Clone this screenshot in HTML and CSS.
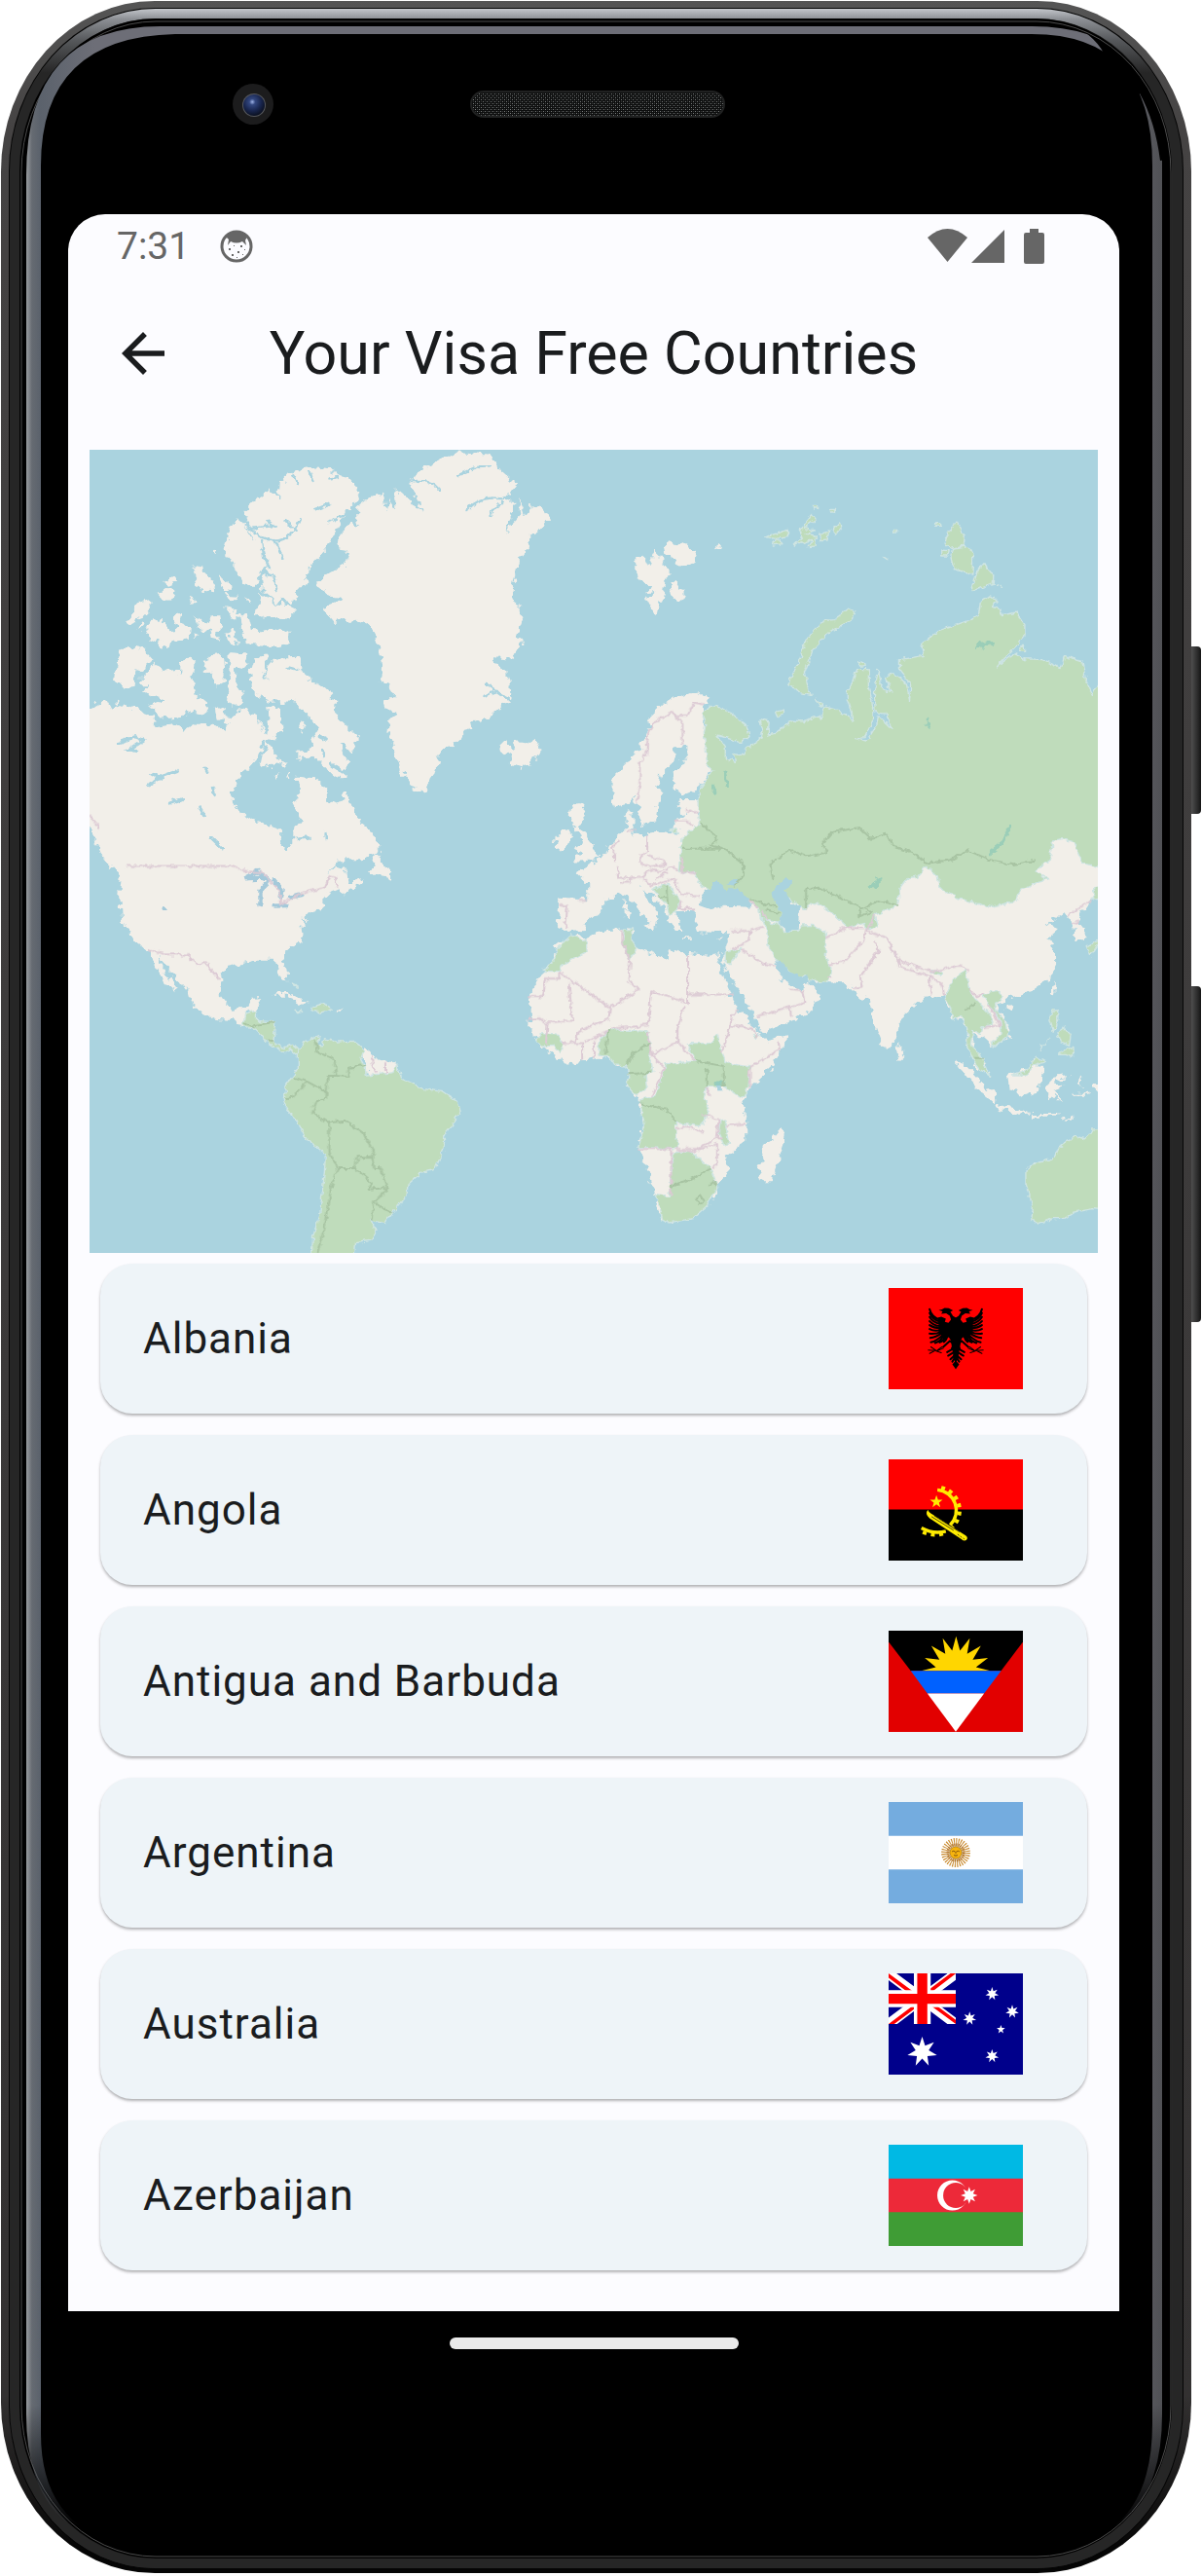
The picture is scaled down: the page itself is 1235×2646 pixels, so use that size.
FILE: index.html
```html
<!DOCTYPE html>
<html lang="en">
<head>
<meta charset="utf-8">
<meta name="viewport" content="width=device-width, initial-scale=1">
<title>Your Visa Free Countries</title>
<link rel="stylesheet" href="styles.css">
</head>
<body>
<div class="phone">
  <svg class="phone-body" viewBox="0 0 1235 2646" preserveAspectRatio="none" aria-hidden="true">
    <defs>
      <linearGradient id="key" x1="0" x2="1" y1="0" y2="0"><stop offset="0" stop-color="#0c0c0c"/><stop offset=".5" stop-color="#4c4c4c"/><stop offset="1" stop-color="#161616"/></linearGradient>
      <linearGradient id="shine" gradientUnits="userSpaceOnUse" x1="0" x2="0" y1="9" y2="75"><stop offset="0" stop-color="#c3c6cb"/><stop offset=".16" stop-color="#8d9095"/><stop offset=".5" stop-color="#55575a"/><stop offset="1" stop-color="#262626"/></linearGradient>
      <linearGradient id="body" gradientUnits="userSpaceOnUse" x1="0" x2="0" y1="0" y2="2646"><stop offset="0" stop-color="#555"/><stop offset=".05" stop-color="#454343"/><stop offset=".93" stop-color="#333131"/><stop offset=".99" stop-color="#050505"/></linearGradient>
      <linearGradient id="edgeX" gradientUnits="userSpaceOnUse" x1="27" x2="1194" y1="0" y2="0"><stop offset="0" stop-color="#999c9f"/><stop offset=".005" stop-color="#666b72"/><stop offset=".012" stop-color="#5b626c"/><stop offset=".06" stop-color="#6d6e77"/><stop offset=".95" stop-color="#6d6e77"/><stop offset="1" stop-color="#505155"/></linearGradient>
      <linearGradient id="fade" gradientUnits="userSpaceOnUse" x1="0" x2="0" y1="2470" y2="2595"><stop offset="0" stop-color="#fff"/><stop offset="1" stop-color="#000"/></linearGradient>
      <mask id="edgeMask"><rect width="1235" height="2646" fill="url(#fade)"/><path d="M1090 20Q1122 32 1135 56L1130 70 1165 105 1171 96Q1187 125 1192 165L1230 160 1200 20Z" fill="#000"/></mask>
      <radialGradient id="lens" cx=".42" cy=".35" r=".7"><stop offset="0" stop-color="#9fb4e8"/><stop offset=".2" stop-color="#33477f"/><stop offset=".6" stop-color="#18254d"/><stop offset="1" stop-color="#090d18"/></radialGradient>
      <pattern id="mesh" width="4" height="4" patternUnits="userSpaceOnUse"><rect width="4" height="4" fill="#0d0e0e"/><path d="M0 0h1v1h-1zM2 2h1v1h-1z" fill="#777a7a"/><path d="M2 0h1v1h-1zM0 2h1v1h-1z" fill="#343636"/></pattern>
    </defs>
    <rect x="1215" y="664" width="19" height="172" rx="4" fill="url(#key)"/>
    <rect x="1215" y="1013" width="19" height="345" rx="4" fill="url(#key)"/>
    <rect x="1" y="1" width="1223" height="2642" rx="158" ry="175" fill="url(#body)"/>
    <rect x="9" y="8" width="1207" height="2631" rx="150" ry="168" fill="#060606"/>
    <rect x="11" y="9" width="1203" height="2629" rx="148" ry="166" fill="#272727"/>
    <rect x="15" y="14" width="1195" height="2619" rx="145" ry="162" fill="none" stroke="url(#shine)" stroke-width="10"/>
    <rect x="20" y="19" width="1184" height="2609" rx="140" ry="157"/>
    <rect x="22" y="22" width="1181" height="2604" rx="138" ry="155" fill="none" stroke="#4c4c4c"/>
    <path mask="url(#edgeMask)" fill="url(#edgeX)" fill-rule="evenodd" d="M165 27H1060Q1194 27 1194 165V2480Q1194 2620 1060 2620H165Q27 2620 27 2480V180Q27 27 165 27ZM180 35Q42 38 42 170V2500Q42 2620 180 2620H1060Q1184 2620 1184 2490V170Q1184 35 1060 35Z"/>
    <circle cx="260" cy="107" r="21" fill="#1c1c1d"/>
    <circle cx="261" cy="108" r="12" fill="#55575c"/>
    <circle cx="261" cy="108" r="11" fill="url(#lens)"/>
    <rect x="484" y="94" width="260" height="26" rx="13" fill="url(#mesh)" stroke="#202121" stroke-width="2"/>
  </svg>

  <main class="screen">
    <div class="status">
      <div class="status-group">
        <span class="clock">7:31</span>
        <svg class="status-app" viewBox="0 0 36 36" aria-hidden="true"><circle cx="18" cy="18" r="15" fill="none" stroke="#666" stroke-width="3"/><path d="M7 8Q18-2 29 8L27 12 28 17 24 13Q18 16 12 13L9 17 10 11Z" fill="#666"/><path d="M10 20h2v2h-2zM15 17h1v1h-1zM22 17h2v2h-2zM26 21h1v1h-1zM19 23h2v2h-2zM13 26h2v2h-2zM24 26h1v1h-1zM18 29h1v1h-1z" fill="#666"/></svg>
      </div>
      <svg class="status-icons" viewBox="953 235 120 36" aria-hidden="true" fill="#666"><path d="M953 244Q973.500 226 994 244L973.500 269Z"/><path d="M998 270 1032 236V270Z"/><path d="M1058 235h9v4h4q2 0 2 2v28q0 2-2 2h-17q-2 0-2-2v-28q0-2 2-2h4z"/></svg>
    </div>

    <header class="bar">
      <button class="back" type="button" aria-label="Back"><svg viewBox="0 0 24 24" aria-hidden="true"><path d="M20 11H7.830l5.590-5.590L12 4l-8 8 8 8 1.410-1.410L7.830 13H20v-2z" fill="#1a1c1e"/></svg></button>
      <h1>Your Visa Free Countries</h1>
    </header>

    <section class="content">
      <svg class="map" viewBox="21 21 3064 2475" preserveAspectRatio="none" role="img" aria-label="World map with visa free countries in green">
        <defs>
          <filter id="coast" x="0" y="0" width="1" height="1"><feTurbulence type="fractalNoise" baseFrequency=".045" numOctaves="2" seed="4"/><feDisplacementMap in="SourceGraphic" scale="34" xChannelSelector="R" yChannelSelector="G"/></filter>
          <filter id="coast-fine" x="0" y="0" width="1" height="1"><feTurbulence type="fractalNoise" baseFrequency=".06" numOctaves="2" seed="9"/><feDisplacementMap in="SourceGraphic" scale="18" xChannelSelector="R" yChannelSelector="G"/></filter>
        </defs>
        <rect x="21" y="21" width="3064" height="2475" fill="#aad3df"/>

        <g fill="#f2efe9" filter="url(#coast)">
          <rect x="1" y="1" width="3104" height="2515" fill="none"/>
          <!-- Greenland, Arctic Canada, Iceland -->
          <path d="M835 195 860 175 915 155 922 212 932 175 950 200 952 140 975 160 1000 180 1025 212 1018 175 992 125 1005 100 1050 70 1100 45 1150 28 1240 35 1252 55 1270 80 1320 125 1300 155 1270 165 1305 180 1308 215 1282 275 1330 225 1325 170 1345 220 1365 195 1400 203 1417 232 1385 275 1360 290 1345 345 1320 350 1315 395 1300 480 1325 500 1338 545 1320 590 1335 610 1310 665 1245 660 1290 715 1300 770 1290 800 1245 840 1180 865 1150 905 1120 935 1090 945 1075 1000 1060 1040 1045 1085 1025 1070 995 1060 965 1005 945 940 930 900 935 850 960 835 925 820 915 790 955 790 925 745 908 735 912 690 905 640 890 595 870 560 825 542 765 552 730 510 770 495 785 475 745 468 710 440 730 410 765 390 795 380 807 345 795 325 770 315 790 270 820 245 840 262 835 230Z"/>
          <path d="M490 210 520 180 565 142 595 170 600 125 625 95 655 85 690 75 740 80 770 95 805 105 842 150 830 180 800 210 745 245 800 225 770 270 745 320 720 350 690 375 685 420 655 455 640 490 600 485 585 490 550 460 545 420 565 385 550 330 490 250 505 230Z"/>
          <path d="M470 232 490 250 515 290 540 310 545 345 565 375 540 405 525 440 490 440 470 400 455 370 440 345 435 315 450 260Z"/>
          <path d="M515 520 545 495 535 462 575 490 640 500 648 520 625 545 560 540ZM480 530 505 535 515 575 540 580 600 568 630 585 625 620 590 628 520 625 490 612ZM435 505 470 515 480 535 455 540ZM330 378 350 375 370 405 400 425 403 460 370 455 345 435ZM412 408 445 430 450 455 430 458ZM435 468 468 470 460 484 440 482ZM498 475 512 485 505 500ZM390 325 405 322 408 345 398 340ZM240 430 275 410 285 430 262 440ZM222 460 240 465 262 447 280 455 272 485 245 483ZM130 550 150 520 175 490 208 482 210 505 190 530 150 558ZM170 580 185 550 192 560ZM190 590 215 540 240 550 265 580 290 575 275 540 290 520 305 560 328 565 325 600 285 608 240 630 232 612ZM325 470 335 475 342 500 333 498ZM342 530 360 545 385 560 380 540 415 530 420 570 410 605 390 600 385 578 360 575ZM440 590 455 570 468 620 445 612ZM340 590h8v12h-8z"/>
          <path d="M110 635 145 628 185 635 215 670 165 705 155 745 128 760 98 725 105 690ZM180 720 225 680 240 705 285 695 300 715 300 680 320 658 340 670 335 720 345 770 385 805 375 835 320 825 300 845 250 850 225 825 195 810 250 790 185 770 205 745 180 745ZM365 690 385 655 425 650 430 700 432 740 410 752 390 715ZM445 645 505 650 490 700 465 695 465 735 485 770 485 800 455 815 435 790 450 720ZM515 760 510 710 525 660 565 655 550 690 560 735 560 690 580 665 655 662 670 700 690 735 735 750 770 795 765 835 840 908 820 955 800 930 775 920 805 985 800 1035 775 1030 735 1000 705 965 655 975 655 950 690 945 700 910 715 885 690 845 640 795 575 800 530 780ZM405 820 430 810 440 845 460 845 440 865 410 850ZM480 815 500 820 545 890 530 840 520 820 560 900 565 870 560 810 600 815 608 880 585 910 550 925 500 890ZM655 880 665 855 680 880 665 890ZM545 990 560 920 590 965 618 992 590 985 570 1003ZM580 1020 600 1015 590 1028ZM623 1015h8v25h-8z"/>
          <path d="M1270 935 1290 915 1300 945 1320 922 1350 925 1375 915 1392 945 1380 975 1335 1000 1295 985 1300 965 1272 945Z"/>
          <path d="M1481 1150 1485 1120 1510 1110 1530 1135 1510 1180 1530 1200 1545 1240 1575 1270 1560 1285 1490 1290 1520 1265 1490 1250 1520 1230 1510 1200 1490 1180ZM1440 1220 1465 1190 1485 1205 1475 1245 1435 1258Z"/>
          <path d="M0 830 50 800 70 790 85 820 105 800 125 808 165 822 215 840 225 870 280 865 300 890 340 865 400 870 440 885 445 850 480 815 500 830 520 830 545 890 550 920 535 965 505 1000 480 1020 460 1055 455 1105 480 1145 540 1170 600 1190 605 1240 625 1260 640 1240 640 1195 665 1160 640 1110 655 1075 650 1025 705 1030 745 1065 750 1105 770 1115 800 1075 820 1120 845 1170 880 1200 905 1240 890 1270 60 1270 40 1230 30 1190 0 1160Z"/>
          <!-- North America, lower part -->
          <g transform="translate(0 1245)">
            <path d="M45 -10 50 5 65 40 115 90 110 150 115 215 155 290 200 320 220 370 235 395 255 430 280 442 270 410 240 370 228 335 270 385 325 450 335 490 400 530 460 535 490 548 500 510 530 500 545 465 510 468 495 498 450 500 420 460 418 410 430 370 480 358 530 350 585 350 600 400 622 415 620 380 605 350 610 330 670 285 670 265 665 220 680 235 690 200 735 185 735 150 780 130 790 150 850 115 850 100 810 110 800 65 770 60 740 90 780 40 850 40 890 25 905 -10 640 -10 625 15 605 -10ZM870 80 890 30 905 20 905 48 935 70 935 98 900 85ZM575 458 600 445 640 455 688 480 660 482 620 458ZM772 500h20v6h-20zM845 640 860 625 895 652 950 665 945 698 870 708Z"/>
          </g>
          <!-- Scandinavia and the Arctic islands -->
          <g transform="translate(1538 0)">
            <path d="M140 345 170 350 185 385 200 330 215 345 230 380 255 405 230 425 222 480 205 530 190 510 175 480 215 455 172 460 190 435 160 435 140 400ZM225 320 245 300 265 320 280 305 325 330 315 362 285 382 260 370 255 345 230 345ZM250 425 262 425 290 470 278 492 255 475ZM378 320 395 308 398 318 382 325Z"/>
            <path d="M80 1125 70 1085 70 1030 105 995 140 965 165 915 185 870 175 855 225 805 280 780 310 765 365 785 350 810 345 850 355 900 360 990 375 1010 335 1065 285 1085 260 1070 255 1020 300 960 300 935 265 940 255 985 220 1020 210 1060 230 1080 210 1110 200 1165 165 1180 145 1110 135 1090 115 1120ZM265 1125 280 1095 335 1095 340 1175 310 1205 290 1215 260 1190 258 1160 295 1150ZM110 1150 135 1135 135 1190 115 1195Z"/>
          </g>
          <!-- Europe, Asia, Africa -->
          <g transform="translate(1538 1245)">
            <path d="M-60 258 -95 245 -90 155 -5 160 -5 110 -40 75 -5 60 10 48 35 40 60 0 85 -30 115 -60 140 -35 200 -45 280 -40 290 -100 1567 -100 1567 130 1535 150 1490 215 1508 260 1505 285 1475 290 1470 235 1450 205 1420 215 1395 240 1428 250 1395 280 1420 330 1420 365 1395 410 1345 445 1280 465 1240 490 1270 540 1278 580 1230 618 1200 590 1170 570 1165 620 1195 650 1218 705 1180 680 1150 610 1150 560 1130 520 1108 535 1100 500 1080 455 1020 465 940 540 935 590 908 628 890 600 855 500 850 465 830 470 780 418 730 415 665 405 650 400 610 400 575 355 560 365 610 430 650 440 660 415 705 455 670 505 610 540 520 573 505 520 440 420 410 365 410 330 430 265 335 262 318 215 320 195 290 195 262 205 280 255 265 255 240 215 230 190 160 125 175 160 215 215 190 250 180 225 110 145 45 160 45 190 10 215 -20 255Z"/>
            <path d="M-53 272 -100 310 -105 350 -140 383 -182 462 -175 510 -183 550 -160 590 -130 625 -75 668 -20 660 30 650 70 655 80 670 120 680 125 700 115 735 150 775 170 855 150 925 180 1000 200 1065 225 1155 270 1148 320 1145 360 1105 390 1050 392 1030 422 1010 415 955 480 905 480 850 462 780 490 740 560 675 605 585 540 598 512 580 500 545 450 500 430 440 400 370 385 340 410 330 360 335 305 330 250 315 240 347 140 310 130 290 138 255 105 253 30 262 -10 280Z"/>
            <path d="M525 920 560 900 585 870 595 905 570 985 555 1030 525 1030 513 990 530 960ZM935 615 945 610 960 640 942 655ZM108 165 122 170 120 190 108 190ZM108 192 125 195 120 225 110 225ZM160 240 205 235 195 255ZM285 280h28v5h-28zM388 283 405 277 400 287ZM1270 490 1295 485 1285 505 1270 502ZM1405 430 1420 420 1412 455 1405 450Z"/>
            <path d="M1110 655 1150 675 1205 735 1238 760 1232 790 1190 755 1150 710ZM1235 795 1300 805 1340 820 1310 825 1240 808ZM1275 705 1345 680 1350 660 1375 675 1380 705 1360 760 1320 768 1280 745ZM1390 740 1410 710 1460 705 1410 730 1440 735 1415 745 1435 785 1415 765 1400 785ZM1345 822 1430 822 1430 830 1350 830ZM1440 842 1475 825 1460 842ZM1490 700 1500 710 1498 740 1488 725ZM1475 758h50v6h-50zM1530 735 1560 730 1560 755 1540 748Z"/>
          </g>
        </g>

        <!-- fjords and lakes -->
        <g fill="none" stroke="#aad3df" stroke-width="7" stroke-linecap="round" filter="url(#coast-fine)">
          <path d="M495 240Q520 290 575 300T660 235M545 300 550 350 568 385M585 305 610 355M705 205 750 188M500 265 580 255M620 240 650 270M1170 205Q1210 160 1270 172L1310 165M1275 180 1235 225M1000 118Q1060 110 1085 145M1140 100 1200 72 1245 70M690 85 700 120M640 100 655 125M750 110 775 105M1225 740 1265 770 1300 795M1220 780 1260 765M585 260 560 240M540 400 580 410 590 450M620 690 655 700"/>
          <path stroke-width="10" d="M105 925 160 905 185 915 140 945 165 950M200 1055 235 1030 285 1012M210 1020 235 1035M265 1110 300 1098M370 1000 378 1015M395 1060 400 1085M355 1125 370 1150M390 1215 425 1250M720 905 740 915M730 950 735 965M755 990 800 1020M655 1218 690 1215M740 1200 740 1220M220 868 300 855 320 830"/>
          <path d="M490 1342 530 1320 570 1350 545 1340ZM540 1425 540 1380 560 1360M580 1345 605 1375 600 1400M585 1427 620 1425M630 1400 670 1392M245 1435 250 1440" stroke="#a4c9da" stroke-width="13"/>
        </g>

        <g fill="#bfdcbb" stroke="#cfe5e3" stroke-width="4" stroke-linejoin="round" filter="url(#coast-fine)">
          <rect x="1" y="1" width="3104" height="2515" fill="none" stroke="none"/>
          <!-- Latin America -->
          <g transform="translate(0 1245)">
            <path d="M485 550 495 512 528 505 528 535 585 540 580 600 615 620 640 610 660 628 652 640 630 620 615 635 560 600 530 565ZM705 490 730 483 758 500 725 510 692 503ZM645 505 668 507 655 510ZM640 420 650 425 652 435Z"/>
            <path d="M655 630 675 600 720 580 712 610 725 615 735 590 770 600 825 598 855 625 845 655 858 675 862 705 940 695 955 672 970 715 1035 745 1095 755 1140 785 1148 815 1130 845 1100 880 1098 930 1070 995 1030 1002 988 1040 985 1075 940 1130 918 1160 875 1150 892 1190 880 1212 830 1220 825 1270 695 1270 700 1200 720 1140 735 1000 738 945 680 900 660 860 615 795 610 775 620 755 615 735 640 705 655 680Z"/>
          </g>
          <!-- Russia and its islands -->
          <g transform="translate(1538 0)">
            <path d="M345 830 380 808 430 830 480 870 488 905 460 922 390 900 415 935 415 970 445 985 440 955 470 960 480 940 520 915 530 890 520 850 548 858 545 900 565 895 620 855 650 858 700 840 705 855 715 812 760 825 805 855 785 790 785 765 805 735 815 698 850 698 850 750 860 790 865 850 840 905 810 908 845 918 875 870 880 840 920 880 905 835 870 830 868 760 880 700 890 755 920 768 900 720 925 710 965 740 975 795 978 745 945 700 945 668 1018 655 1010 620 1060 580 1160 545 1185 530 1190 490 1220 470 1240 490 1225 505 1250 510 1255 530 1300 522 1325 560 1325 595 1240 690 1290 650 1325 665 1375 668 1435 695 1445 658 1500 675 1510 730 1530 775 1567 720 1567 1310 1500 1295 1475 1230 1440 1220 1405 1225 1410 1245 1400 1285 1355 1320 1395 1343 1310 1380 1300 1410 1225 1430 1125 1405 1065 1370 1060 1335 1025 1305 1000 1335 970 1340 945 1375 940 1425 870 1455 880 1490 845 1500 835 1480 790 1495 730 1440 690 1415 655 1435 600 1400 580 1480 525 1465 515 1435 480 1405 345 1370 320 1325 272 1320 285 1215 335 1175 335 1070 375 1010 360 990 350 890 355 870Z"/>
            <path d="M607 740 635 680 660 610 715 548 745 545 790 510 810 520 800 545 730 585 680 640 655 710 675 778 640 770ZM690 790 712 808 702 815ZM570 830 590 822 590 835 575 842ZM822 678 835 675 838 685 825 688ZM1085 290 1118 240 1143 285 1140 315 1100 325 1080 310ZM1100 350 1105 325 1140 318 1168 335 1165 405 1110 388ZM1070 330 1095 332 1090 348 1070 348ZM1165 455 1180 395 1200 372 1230 410 1228 435ZM1055 245h15v8h-15zM535 290 605 268 605 290 570 295 590 310 560 315 570 295ZM640 270 680 220 690 235 655 262 685 270 660 280 690 285 690 318 665 320 680 298 625 315 650 290ZM700 280 730 270 725 300 705 302ZM740 270 765 243 768 260 750 282ZM925 268h12v8h-12zM685 193h12v8h-12zM735 205h12v8h-12zM893 352 907 362ZM1243 438 1256 448ZM1310 628h14v12h-14zM245 1195 265 1190 275 1205Z"/>
          </g>
          <!-- Middle East, South-East Asia, Africa, Australia -->
          <g transform="translate(1538 1245)">
            <path d="M195 130 240 112 275 165 275 190 245 213 238 180ZM525 215 550 235 580 240 590 260 635 258 650 240 680 238 720 265 720 340 740 390 725 415 670 410 655 395 630 402 595 370 570 350 545 300 540 255ZM108 255 135 252 130 285 145 315 125 345 102 300ZM415 325 465 310 430 362 415 355ZM-53 272 -8 290 -5 325 -85 365 -90 383 -138 383 -100 345 -100 315ZM-158 595 -145 575 -90 580 -80 605 -85 635 -105 610 -145 612ZM30 645 30 600 60 562 180 568 187 600 187 640 195 695 175 700 178 735 145 768 115 735 122 700 115 675 80 672 65 650ZM300 605 370 605 392 580 415 665 490 678 485 740 468 775 410 738 360 738 350 765 365 815 340 860 265 850 268 930 150 925 170 860 155 780 200 768 235 668 325 660ZM255 945 310 940 370 990 390 1045 360 1105 315 1145 240 1158 225 1150 205 1070 245 1075ZM400 840 415 850 425 915 410 918 395 880ZM498 582 512 578 508 592ZM1040 388 1050 380 1075 385 1070 395Z"/>
            <path d="M1082 465 1110 405 1145 378 1155 435 1172 465 1215 510 1230 545 1195 555 1190 575 1168 565 1160 610 1195 650 1218 705 1180 680 1150 610 1150 560 1130 520 1108 535 1100 500ZM1195 455 1245 445 1258 465 1235 485 1240 510 1270 540 1275 580 1228 618 1225 600 1255 575 1250 535 1215 485ZM1285 705 1320 695 1345 665 1360 645 1388 662 1350 675 1330 705ZM1405 505 1425 503 1425 530 1412 570 1402 535ZM1425 570 1445 555 1465 580 1460 610 1435 600ZM1425 640 1470 615 1472 650 1450 640ZM1368 628 1398 590ZM1512 305 1560 280 1545 305 1525 335ZM1530 160 1535 125 1567 120 1567 155ZM1567 868 1530 870 1510 900 1480 890 1430 925 1415 958 1345 980 1328 995 1328 1040 1350 1110 1345 1150 1370 1162 1410 1145 1445 1145 1475 1125 1530 1115 1567 1118Z"/>
          </g>
        </g>

        <!-- inland seas -->
        <g fill="#aad3df" filter="url(#coast-fine)">
          <g transform="translate(1538 1245)">
            <path d="M335 180 345 150 385 105 415 130 455 130 490 165 492 185 410 182 370 193ZM415 112 465 95 440 120ZM555 140 590 100 622 98 620 115 595 130 615 175 632 180 640 190 635 255 605 260 580 240 585 205 560 160ZM620 180 645 180 640 200ZM565 352 590 355 610 385 650 402 668 395 660 425 610 425Z"/>
            <path d="M385 725h20v26h-20z"/>
          </g>
        </g>
        <g fill="none" stroke="#8fcab8" stroke-width="13" stroke-linecap="round" opacity=".75" filter="url(#coast)">
          <path d="M2720 630 2765 610M2563 875 2572 860M1912 1055 1920 1070M1952 1020 1960 1050M2760 1260 2800 1225 2820 1180M2405 1360 2420 1350M1925 1975 1945 1978"/>
        </g>

        <!-- country borders -->
        <g fill="none" stroke="#dccad4" stroke-width="6" stroke-linejoin="round" filter="url(#coast-fine)">
          <path d="M21 1150 50 1180 45 1195M130 1304H450L500 1320 545 1323 600 1380 600 1425 670 1385 735 1372 750 1335 768 1340 775 1370M200 1560 245 1575 315 1577 350 1610 375 1600 410 1650H420M880 1890 880 1915 895 1940M920 1905V1940"/>
          <g transform="translate(1538 0)"><path d="M145 1105 155 1050 155 985 175 960 180 900 205 855 255 830 285 865V930M265 840H300L320 800 350 805M295 1130 330 1140M260 1163H295L320 1180M115 1195H145"/></g>
          <g transform="translate(1538 1245)">
            <path d="M80 45V20L65 5 90-20M178-35V10L155 30 155 50 185 60 235 55 225 40 180 25M85 60 90 95 130 95 125 110 95 110M130 95 160 95 185 70 215 75 255 60 270 75M165 95 190 120 240 105 260 95M205 100 240 75M260 100 280 145 335 150M280 165 275 190 320 190M0 165H-30M-90 180H-65L-70 250M285 30 280 75 325 82"/>
            <path d="M-90 385 65 495 150 440 120 410 125 345 102 295V255M302 335V480L190 445 180 550 65 560M302 455H440M65 495 60 530 15 550M-90 385V405H-130L-140 462H-182M-60 420-50 535-125 540-130 605M-183 530-150 528-125 545M-45 605-30 570 15 545M-80 605H-20V660M15 600V650M-15 600 20 590 60 565M180 568 190 640 270 600 270 560 290 490M270 600 325 660M190 640 230 680 190 770M430 555 435 520 455 505M430 550 500 560 510 590M405 630 430 555M490 678 580 625 575 595M490 678V740M265 870 295 860 350 880M265 930 330 930 390 895M345 825 395 840 390 895 410 895M415 858 478 852M310 940 390 915 390 980 375 990M150 930H250V1075M270 938 310 938M355 740 370 770"/>
            <path d="M430 258H490L485 290 435 315M490 258 530 245M465 315 530 360 565 365M510 520 540 515 610 490 615 520M610 440 650 445 655 480 615 495M720 280 780 250M730 365 780 350 835 290 840 250M780 250 835 250M725 400H740M870 210 845 260 905 280 930 330 945 350 1040 385 1130 365 1155 380M940 350 945 370 1040 400M870 290 880 320 825 400 830 430 805 435M1035 400 1040 455M1040 400 1075 425 1080 460M1155 435 1180 460 1200 450M1215 485 1250 550 1200 555M1455 210 1530 165M1470 235 1490 230M525 195 545 230M515 190 490 165"/>
          </g>
        </g>
        <g fill="none" stroke="#a8c4a3" stroke-width="6" stroke-linejoin="round" filter="url(#coast-fine)">
          <g transform="translate(0 1245)"><path d="M705 590 710 630 765 655 770 705 745 705 740 775 710 785 698 820 745 850 800 845 850 880 885 940 880 955H835L828 990 775 990 750 940 748 850M640 710 680 722 740 755M615 775 640 770 680 725M770 705 805 708 810 680 858 672M880 955 885 990 905 990 928 1050 870 1055 880 1035 828 990M775 990 755 1050 740 1150 715 1255M928 1050 885 1095 880 1150M885 1095 940 1130M515 550 585 540M490 540 525 560M560 595 580 598M710 600 718 625"/></g>
          <g transform="translate(1538 1245)"><path d="M285 5H410L470 50V85L440 120M340 -75 370 -50 390 -20 370 -5 410 5M550 50 610 10 665 30 725 15 710 -10 740 -45 820 -60 860 -25 900 -40 930 0 980 15 1025 50 1100 40 1150 10 1220 40 1290 55 1360 40M550 50 560 100M660 190V130L700 125 760 155 830 190 880 165 940 180M830 190 820 215 860 200 840 190M490 160 570 185M540 190 580 205M60 562 50 640M185 605 130 640 115 675M120 700 190 695M325 660 410 675M360 680V738M410 675V738M155 790 240 810 265 850M245 1045 300 1030 370 990M325 1085 340 1075 350 1090 335 1102ZM365 1045 380 1030 385 1045M1145 505 1172 480M1172 650 1195 650M235 115 240 180M210 150 240 160"/></g>
        </g>
      </svg>

      <ul class="countries">
        <li class="card"><span>Albania</span>
          <svg class="flag" viewBox="100 99 413 311" preserveAspectRatio="none" role="img" aria-label="Flag of Albania"><path fill="red" d="M100 99h413v311H100z"/><g id="eagle"><path d="M307 190 298 185 290 172 298 168 285 161 272 160 264 165 254 167 266 171 262 178 277 177 288 184 292 196 284 206 273 203 276 193 262 187 250 190 253 197 254 210V237L269 249 285 251 300 268 291 285 300 295 298 313 304 325 296 334 307 349Z"/><g fill="none" stroke="#000" stroke-width="6" stroke-linecap="round"><path d="M226 164Q232 190 262 198M226 176Q234 196 258 203M226 188Q236 205 258 209M226 201Q238 214 258 216M226 213Q240 223 260 222M226 225Q240 233 260 228M226 239Q242 242 262 233M228 252Q244 251 266 236M230 266Q248 262 270 240M243 268Q256 264 268 248M257 266Q268 262 274 250M270 265Q277 260 280 250M300 270 288 262 268 280M300 285 280 296M302 295 283 307M304 305 290 318M304 313 296 325"/><path stroke-width="3" d="M222 290 250 292 268 284M226 300 245 290 230 280M238 290 262 298M250 290 264 280"/></g></g><use href="#eagle" transform="matrix(-1 0 0 1 613 0)"/><path d="M290 205h34v50l-10 55h-14l-10-55z"/></svg></li>
        <li class="card"><span>Angola</span>
          <svg class="flag" viewBox="100 627 413 311" preserveAspectRatio="none" role="img" aria-label="Flag of Angola"><path fill="red" d="M100 627h413v156H100z"/><path d="M100 781h413v157H100z"/><g fill="none" stroke="#ffec00"><path stroke-width="10" d="M250 721A63 63 0 0 1 289 829"/><path stroke-width="10" d="M201 838Q237 858 276 848"/><path stroke-width="12" stroke-dasharray="12 13" d="M262 714A71 71 0 0 1 296 835"/><path stroke-width="10" stroke-dasharray="12 14" d="M205 851Q240 866 270 855"/></g><path fill="#ffec00" d="M247 737 252 751 266 751 255 760 259 774 247 765 235 774 239 760 227 751 242 751ZM221 782Q222 790 236 797L337 861Q345 867 340 874 333 880 324 872L226 808Q210 795 221 782Z"/><path fill="none" stroke="#000" stroke-width="2" d="M232 803 300 845M240 800 318 850M312 857 317 861M320 863 325 867M329 869 333 872"/></svg></li>
        <li class="card"><span>Antigua and Barbuda</span>
          <svg class="flag" viewBox="101 1157 412 308" preserveAspectRatio="none" role="img" aria-label="Flag of Antigua and Barbuda"><path fill="#e20000" d="M100 1156h413v310H100z"/><path d="M101 1157H513V1191L446 1279H169L101 1191Z"/><path fill="#ffd600" d="M201 1279 246 1268 212 1240 257 1245 232 1203 275 1227 267 1180 296 1218 308 1174 320 1218 350 1180 342 1227 384 1203 359 1245 406 1240 369 1268 413 1279Z"/><path fill="#0061ff" d="M169 1279H446L394 1348H220Z"/><path fill="#fff" d="M220 1348H394L307 1464Z"/></svg></li>
        <li class="card"><span>Argentina</span>
          <svg class="flag" viewBox="0 0 640 480" preserveAspectRatio="none" role="img" aria-label="Flag of Argentina"><path fill="#74acdf" d="M0 0h640v480H0z"/><path fill="#fff" d="M0 160h640v160H0z"/><circle cx="320" cy="240" r="50" fill="none" stroke="#c98a2e" stroke-width="38" stroke-dasharray="4.300 5.500"/><circle cx="320" cy="240" r="38" fill="none" stroke="#a86a20" stroke-width="12" stroke-dasharray="5 5"/><circle cx="320" cy="240" r="29" fill="#f6b40e" stroke="#85540d" stroke-width="3"/><path d="M302 235q8-6 14 0M324 235q8-6 14 0M311 252q9 5 18 0M320 234v10" fill="none" stroke="#6b3d0a" stroke-width="4"/></svg></li>
        <li class="card"><span>Australia</span>
          <svg class="flag" viewBox="0 0 640 480" preserveAspectRatio="none" role="img" aria-label="Flag of Australia">
            <defs><path id="star7" d="M0-9 1.736-3.605 7.036-5.611 3.901-.891 8.774 2.003 3.129 2.495 3.905 8.109 0 4 -3.905 8.109 -3.129 2.495 -8.774 2.003 -3.901-.891 -7.036-5.611 -1.736-3.605Z"/></defs>
            <path fill="#00008b" d="M0 0h640v480H0z"/><path fill="#fff" d="m37.500 0 122 90.500L281 0h39v31l-120 89.500 120 89V240h-40l-120-89.500L40.500 240H0v-30l119.500-89L0 32V0z"/><path fill="red" d="M212 140.500 320 220v20l-135.500-99.500zm-92 10 3 17.500-96 72H0zM320 0v1.500l-124.500 94 1-22L295 0zM0 0l119.500 88h-30L0 21z"/><path fill="#fff" d="M120.500 0v240h80V0zM0 80v80h320V80z"/><path fill="red" d="M0 96.500v48h320v-48zM136.500 0v240h48V0z"/>
            <g fill="#fff"><use href="#star7" transform="translate(160 372) scale(8)"/><use href="#star7" transform="translate(493 97) scale(3.600)"/><use href="#star7" transform="translate(589 181) scale(3.600)"/><use href="#star7" transform="translate(386 214) scale(3.600)"/><use href="#star7" transform="translate(493 392) scale(3.600)"/><path d="m535 245 5 14h15l-12 10 4 15-12-9-12 9 4-15-12-10h15z"/></g></svg></li>
        <li class="card"><span>Azerbaijan</span>
          <svg class="flag" viewBox="0 0 640 480" preserveAspectRatio="none" role="img" aria-label="Flag of Azerbaijan"><path fill="#3f9c35" d="M0 0h640v480H0z"/><path fill="#ed2939" d="M0 0h640v320H0z"/><path fill="#00b9e4" d="M0 0h640v160H0z"/><circle cx="304" cy="240" r="72" fill="#fff"/><circle cx="320" cy="240" r="60" fill="#ed2939"/><path fill="#fff" d="m384 200 7.700 21.500 20.600-9.800-9.800 20.700L424 240l-21.500 7.700 9.800 20.600-20.600-9.800L384 280l-7.700-21.500-20.600 9.800 9.800-20.600L344 240l21.500-7.700-9.800-20.600 20.600 9.800z"/></svg></li>
      </ul>
    </section>
  </main>
  <div class="home"></div>
</div>
</body>
</html>
```
FILE: styles.css
```css
* {
  box-sizing: border-box;
}

body {
  margin: 0;
  background: #fff;
  color: #1a1c1e;
  font-family: Roboto, sans-serif;
}

.phone {
  position: relative;
  padding: 220px 85px 233px 70px;
}

.phone-body {
  position: absolute;
  inset: 0;
  width: 100%;
  height: 100%;
}

.screen {
  position: relative;
  overflow: hidden;
  padding-bottom: 42px;
  border-radius: 38px 38px 0 0;
  background: #fcfcff;
}

.status {
  display: flex;
  align-items: center;
  justify-content: space-between;
  height: 66px;
  padding: 0 77px 0 50px;
}

.status-group {
  display: flex;
  align-items: center;
  gap: 30px;
}

.clock {
  color: #666;
  font-size: 39px;
  line-height: 44px;
}

.status-app {
  width: 36px;
  height: 36px;
}

.status-icons {
  width: 120px;
  height: 36px;
}

.bar {
  display: flex;
  align-items: center;
  height: 154px;
  padding: 0 44px;
}

.back {
  display: flex;
  flex: none;
  width: 66px;
  height: 66px;
  padding: 0;
  border: 0;
  background: none;
}

.back svg {
  width: 100%;
}

h1 {
  flex: 1;
  margin: 0 66px 0 0;
  font-size: 61px;
  font-weight: 400;
  line-height: 70px;
  text-align: center;
}

.content {
  padding: 22px 22px 0;
}

.map {
  display: block;
  width: 100%;
  aspect-ratio: 1036 / 825;
}

.countries {
  display: grid;
  gap: 22px;
  margin: 0;
  padding: 11px 11px 0;
  list-style: none;
}

.card {
  display: flex;
  align-items: center;
  justify-content: space-between;
  padding: 25px 66px 25px 44px;
  border-radius: 33px;
  background: #eef4f8;
  box-shadow: 0 2px 3px rgba(0, 0, 0, 0.3);
  font-size: 44px;
  letter-spacing: 1px;
  line-height: 52px;
}

.flag {
  display: block;
  width: 138px;
  height: 104px;
}

.home {
  position: relative;
  width: 297px;
  height: 12px;
  margin: 27px auto 0;
  border-radius: 6px;
  background: #eaeaea;
}
```
